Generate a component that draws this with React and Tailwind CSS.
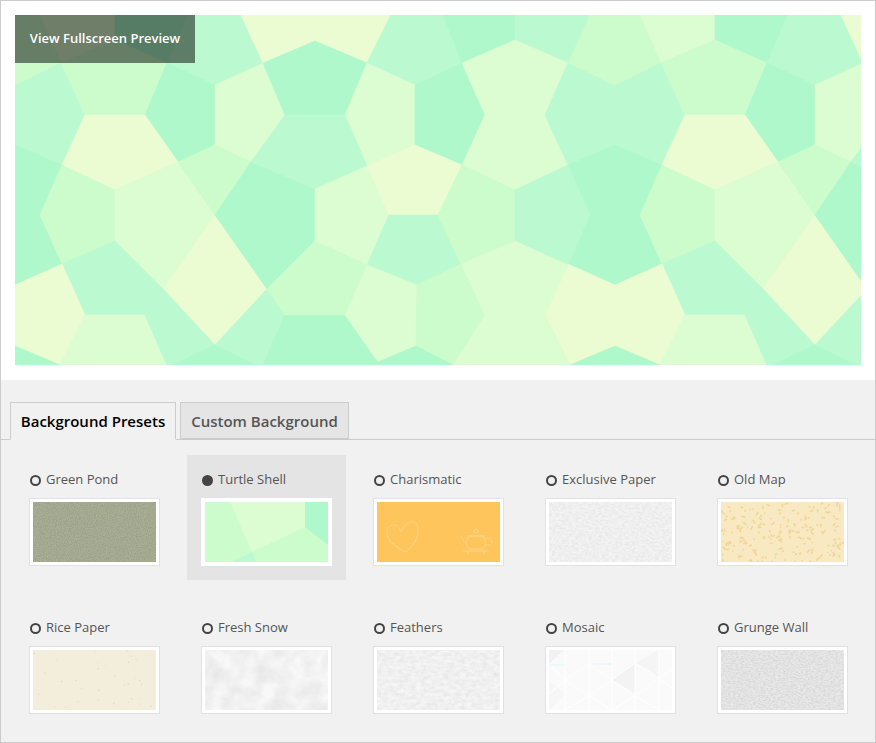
const A = "#ecfcd2";
const B = "#dcfcd2";
const C = "#ccfccb";
const D = "#bbfad0";
const E = "#aff8cb";

// one 600px wide tile of the turtle shell pattern, page coordinates
const shells = [
  [A, "241,15 391,15 367,63 315,41 263,63"],
  [D, "391,15 443,15 462,63 415,85 367,63"],
  [E, "443,15 515,15 515,40 462,63"],
  [D, "515,15 590,15 568,63 515,40"],
  [C, "590,15 640,15 661,63 615,86 568,63"],
  [B, "640,15 715,15 715,40 661,63"],
  [E, "715,15 788,15 767,63 715,40"],
  [D, "788,15 841,15 863,63 815,85 767,63"],
  [E, "315,41 367,63 345,115 285,115 263,63"],
  [B, "367,63 415,85 415,145 367,166 345,115"],
  [E, "415,85 462,63 485,115 462,165 415,145"],
  [B, "462,63 515,40 568,63 545,115 568,165 515,190 462,165 485,115"],
  [D, "568,63 615,86 661,63 685,115 662,165 615,145 568,165 545,115"],
  [C, "661,63 715,40 767,63 745,115 685,115"],
  [E, "767,63 815,85 815,145 778,162 745,115"],
  [B, "815,85 863,63 885,115 851,162 815,145"],
  [D, "285,115 345,115 367,166 315,189 251,162"],
  [A, "685,115 745,115 778,162 715,190 662,165"],
  [E, "615,145 662,165 640,215 662,264 615,285 568,264 590,215 568,165"],
  [C, "662,165 715,190 715,241 662,264 640,215"],
  [B, "715,190 778,162 815,215 763,289 715,241"],
  [A, "815,215 867,289 815,345 763,289"],
  [C, "778,162 815,145 851,162 815,215"],
  [E, "851,162 915,189 915,241 867,289 815,215"],
  [B, "315,189 367,166 389,215 367,265 315,241"],
  [A, "367,166 415,145 462,165 438,215 389,215"],
  [D, "389,215 438,215 461,265 417,285 367,265"],
  [C, "462,165 515,190 515,241 461,265 438,215"],
  [D, "515,190 568,165 590,215 568,265 515,241"],
  [D, "662,264 715,241 763,289 745,315 685,315"],
  [A, "568,264 615,285 662,264 685,315 660,365 615,346 570,365 545,315"],
  [B, "685,315 745,315 767,365 660,365"],
  [D, "763,289 815,345 773,365 767,365 745,315"],
  [E, "815,345 858,365 773,365"],
  [D, "815,345 867,289 885,315 863,365 858,365"],
  [E, "285,315 345,315 378,362 375,365 263,365"],
  [C, "267,289 315,241 367,265 345,315 285,315"],
  [B, "367,265 417,285 416,346 378,362 345,315"],
  [C, "417,285 461,264 485,315 453,365 416,346"],
  [B, "461,264 515,241 568,265 545,315 570,365 453,365 485,315"],
  [E, "378,362 416,346 453,365 375,365"],
  [E, "570,365 615,346 660,365"],
];

function Hero() {
  return (
    <svg className="block" width="846" height="350" viewBox="15 15 846 350">
      <rect x="15" y="15" width="846" height="350" fill={D} />
      {[-600, 0, 600].map((dx) => (
        <g key={dx} transform={`translate(${dx} 0)`}>
          {shells.map(([fill, points], i) => (
            <polygon key={i} points={points} fill={fill} stroke={fill} strokeWidth="0.6" />
          ))}
        </g>
      ))}
    </svg>
  );
}

function Noise({ id, base, freq, octaves = 2, k, c, seed = 3 }) {
  return (
    <svg className="block" width="123" height="60" viewBox="0 0 123 60">
      <filter id={id} x="0" y="0" width="100%" height="100%" colorInterpolationFilters="sRGB">
        <feTurbulence type="fractalNoise" baseFrequency={freq} numOctaves={octaves} seed={seed} />
        <feColorMatrix values={`0 0 0 0 0 0 0 0 0 0 0 0 0 0 0 ${k} 0 0 0 ${c}`} />
      </filter>
      <rect width="123" height="60" fill={base} />
      <rect width="123" height="60" filter={`url(#${id})`} />
    </svg>
  );
}

function specks(count, seed) {
  const out = [];
  let s = seed;
  const next = () => {
    s = (s * 16807) % 2147483647;
    return s / 2147483647;
  };
  for (let i = 0; i < count; i++) {
    out.push({ x: next() * 123, y: next() * 60, r: next() * 180, l: 1.5 + next() * 3.5 });
  }
  return out;
}

function OldMap() {
  return (
    <svg className="block" width="123" height="60" viewBox="0 0 123 60">
      <rect width="123" height="60" fill="#f8e9c3" />
      {specks(190, 77).map((p, i) => (
        <rect key={i} x={p.x} y={p.y} width={p.l} height="1.6" rx="0.8" fill="#f0d596" transform={`rotate(${p.r} ${p.x} ${p.y})`} />
      ))}
    </svg>
  );
}

function RicePaper() {
  return (
    <svg className="block" width="123" height="60" viewBox="0 0 123 60">
      <rect width="123" height="60" fill="#f2eedb" />
      {specks(55, 411).map((p, i) => (
        <circle key={i} cx={p.x} cy={p.y} r={p.l / 6} fill="#dfdac2" />
      ))}
    </svg>
  );
}

function Turtle() {
  return (
    <svg className="block" width="123" height="60" viewBox="0 0 123 60">
      <rect width="123" height="60" fill={C} />
      <polygon points="25,0 100,0 100,25 47,50" fill={B} />
      <polygon points="100,0 123,0 123,43 100,25" fill={E} />
      <polygon points="47,50 51,60 26,60" fill={D} />
    </svg>
  );
}

function Charismatic() {
  return (
    <svg className="block" width="123" height="60" viewBox="0 0 123 60" fill="none" stroke="#fed586" strokeWidth="1">
      <rect width="123" height="60" fill="#fec55c" stroke="none" />
      <path d="M29 50C20 46 10 39 10 31C10 25 14 22.5 18 23C21 23.5 23 27 24 31C26 25 30 20 36 20C40 20 41 25 41 30C41 37 35 45 29 50Z" />
      <circle cx="99" cy="29" r="2" />
      <path d="M91 36C94 33 104 33 107 36C109 40 109 44 106 47H92C89 44 89 40 91 36Z" />
      <path d="M90 34H108" />
      <path d="M89.5 42C87 41 86 36 84 34" />
      <path d="M108.5 37C112 35 115 37 115 39.5C115 42.5 111 44 108.5 43" />
      <path d="M86 49H112M91 49V52M107 49V52" />
    </svg>
  );
}

function Mosaic() {
  return (
    <svg className="block" width="123" height="60" viewBox="0 0 123 60">
      <rect width="123" height="60" fill="#fafafa" />
      <polygon points="0,0 15,0 0,14" fill="#f2f2f2" />
      <polygon points="63,30 86,13 86,43" fill="#f3f3f3" />
      <polygon points="86,13 110,0 110,28" fill="#f5f5f5" />
      <polygon points="0,30 16,44 0,60" fill="#f6f6f6" />
      <g stroke="#ffffff" strokeWidth="1" fill="none">
        <path d="M16 0V60M40 0V60M63 0V60M86 0V60M110 0V60" />
        <path d="M0 14L16 30L40 14L63 30L86 13L110 28L123 20" />
        <path d="M0 44L16 30L40 46L63 30L86 46L110 28L123 38" />
        <path d="M0 60L16 60L40 46L63 60L86 46L110 60" />
      </g>
      <path d="M1 15H16M43 14H63" stroke="#e6faf7" strokeWidth="1.5" />
    </svg>
  );
}

const presets = [
  { name: "Green Pond", art: <Noise id="pond" base="#a9ae95" freq="0.9" k={0.2} c={-0.07} /> },
  { name: "Turtle Shell", art: <Turtle />, active: true },
  { name: "Charismatic", art: <Charismatic /> },
  { name: "Exclusive Paper", art: <Noise id="exclusive" base="#f5f5f5" freq="0.3 0.5" octaves={3} k={0.1} c={-0.025} /> },
  { name: "Old Map", art: <OldMap /> },
  { name: "Rice Paper", art: <RicePaper /> },
  { name: "Fresh Snow", art: <Noise id="snow" base="#f8f8f8" freq="0.06" octaves={4} k={0.12} c={-0.035} /> },
  { name: "Feathers", art: <Noise id="feathers" base="#f6f6f6" freq="0.18 0.3" octaves={4} k={0.1} c={-0.025} /> },
  { name: "Mosaic", art: <Mosaic /> },
  { name: "Grunge Wall", art: <Noise id="grunge" base="#e9e9e9" freq="0.4 0.7" octaves={3} k={0.16} c={-0.05} /> },
];

export default function App() {
  return (
    <div className="w-[876px] h-[743px] border border-[#ccc] bg-[#f1f1f1] font-['Open_Sans',sans-serif] overflow-hidden">
      <div className="bg-white pt-[14px] pb-[15px] px-[14px]">
        <div className="relative">
          <Hero />
          <a className="absolute left-0 top-0 w-[180px] h-[48px] flex items-center justify-center bg-black/50 text-white text-[13px] font-semibold">
            View Fullscreen Preview
          </a>
        </div>
      </div>

      <div className="pt-[22px] pl-[9px] flex gap-1 border-b border-[#ccc] h-[60px]">
        <div className="h-[38px] w-[166px] flex items-center justify-center border border-[#ccc] border-b-[#f1f1f1] bg-[#f1f1f1] text-[#000] text-[15px] font-semibold">
          Background Presets
        </div>
        <div className="h-[37px] w-[169px] pt-px flex items-center justify-center border border-[#ccc] bg-[#e5e5e5] text-[#555] text-[15px] font-semibold">
          Custom Background
        </div>
      </div>

      <div className="mt-[15px] ml-[14px] grid grid-cols-[repeat(5,159px)] gap-x-[13px] gap-y-[23px]">
        {presets.map((p) => (
          <div key={p.name} className={p.active ? "h-[125px] pl-[14px] pt-[16px] bg-[#e4e4e4]" : "h-[125px] pl-[14px] pt-[16px]"}>
            <div className="flex items-center h-[18px] pl-px text-[13px] text-[#555]">
              <span className={p.active ? "w-[11px] h-[11px] rounded-full bg-[#444] mr-[5px]" : "w-[11px] h-[11px] rounded-full border-2 border-[#444] mr-[5px]"} />
              {p.name}
            </div>
            <div className={p.active ? "mt-[9px] w-[131px] h-[68px] border border-white bg-white p-[3px]" : "mt-[9px] w-[131px] h-[68px] border border-[#e2e2e2] bg-white p-[3px]"}>
              {p.art}
            </div>
          </div>
        ))}
      </div>
    </div>
  );
}
